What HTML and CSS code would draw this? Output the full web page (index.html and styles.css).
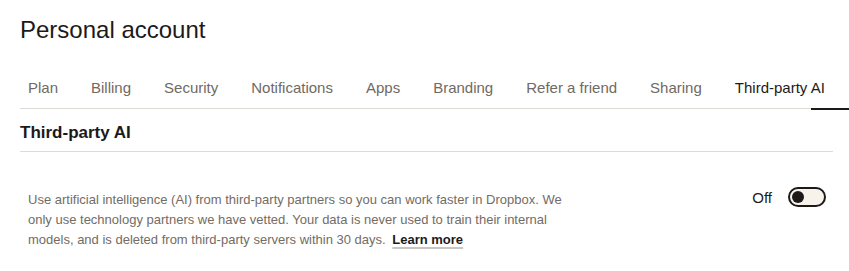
FILE: index.html
```html
<!DOCTYPE html>
<html lang="en">
<head>
    <meta charset="UTF-8">
    <meta name="viewport" content="width=device-width, initial-scale=1.0">
    <title>Personal account</title>
    <link rel="stylesheet" href="styles.css">
</head>
<body>
    <div class="page">
        <h1 class="page-title">Personal account</h1>

        <nav class="tabs">
            <a class="tab" href="#">Plan</a>
            <a class="tab" href="#">Billing</a>
            <a class="tab" href="#">Security</a>
            <a class="tab" href="#">Notifications</a>
            <a class="tab" href="#">Apps</a>
            <a class="tab" href="#">Branding</a>
            <a class="tab" href="#">Refer a friend</a>
            <a class="tab" href="#">Sharing</a>
            <a class="tab active" href="#">Third-party AI</a>
        </nav>

        <section class="section">
            <h2 class="section-title">Third-party AI</h2>

            <div class="setting-row">
                <p class="setting-desc">
                    Use artificial intelligence (AI) from third-party partners so you can work faster in Dropbox. We
                    only use technology partners we have vetted. Your data is never used to train their internal
                    models, and is deleted from third-party servers within 30 days.
                    <a class="learn-more" href="#">Learn more</a>
                </p>
                <div class="setting-control">
                    <span class="toggle-label">Off</span>
                    <button class="toggle" role="switch" aria-checked="false" aria-label="Third-party AI"></button>
                </div>
            </div>
        </section>
    </div>
</body>
</html>
```

FILE: styles.css
```css
body {
    margin: 0;
    font-family: "Liberation Sans", Arial, sans-serif;
    color: #1e1919;
    background: #fff;
}
.page {
    padding: 16px 0 0 20px;
}
.page-title {
    margin: 0;
    font-size: 24px;
    font-weight: normal;
    line-height: 28px;
}
.tabs {
    display: flex;
    gap: 33px;
    margin-top: 34px;
    padding-left: 8px;
    border-bottom: 1px solid #dedbd7;
}
.tab {
    position: relative;
    padding-bottom: 10px;
    font-size: 15px;
    line-height: 20px;
    color: #6f6a64;
    text-decoration: none;
    white-space: nowrap;
}
.tab.active {
    color: #1e1919;
}
.tab.active::after {
    content: "";
    position: absolute;
    left: 76px;
    right: -25px;
    bottom: -2px;
    height: 2px;
    background: #1e1919;
}
.section {
    margin-right: 16px;
}
.section-title {
    margin: 13px 0 0;
    padding-bottom: 7px;
    font-size: 17px;
    font-weight: bold;
    line-height: 22px;
    border-bottom: 1px solid #dedbd7;
}
.setting-row {
    display: flex;
    justify-content: space-between;
    align-items: flex-start;
    margin-top: 35px;
    padding: 0 7px 0 8px;
}
.setting-desc {
    max-width: 540px;
    margin: 3px 0 0;
    font-size: 13px;
    line-height: 20px;
    color: #736c64;
}
.learn-more {
    margin-left: 3px;
    font-weight: bold;
    color: #1e1919;
    text-decoration: underline;
    text-decoration-color: #c9c5c0;
    text-decoration-thickness: 2px;
    text-underline-offset: 3px;
}
.setting-control {
    display: flex;
    align-items: center;
    gap: 16px;
}
.toggle-label {
    padding-top: 2px;
    font-size: 15px;
    line-height: 18px;
}
.toggle {
    position: relative;
    width: 38px;
    height: 20px;
    padding: 0;
    border: 2px solid #1e1919;
    border-radius: 10px;
    background: #f7f2ea;
    cursor: pointer;
}
.toggle::before {
    content: "";
    position: absolute;
    left: 2px;
    top: 2px;
    width: 12px;
    height: 12px;
    border-radius: 50%;
    background: #1e1919;
}
```
